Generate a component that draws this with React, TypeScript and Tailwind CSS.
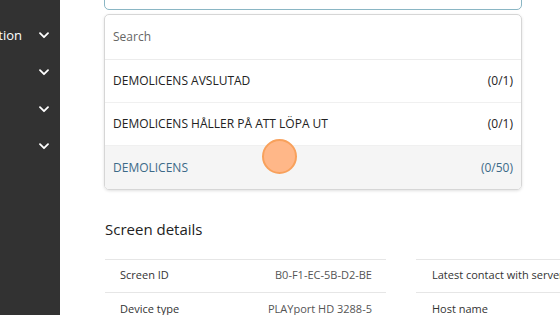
import React from 'react';

const navItems = ['Presentation', '', '', ''];

const licenses = [
  { name: 'DEMOLICENS AVSLUTAD', count: '(0/1)', active: false },
  { name: 'DEMOLICENS HÅLLER PÅ ATT LÖPA UT', count: '(0/1)', active: false },
  { name: 'DEMOLICENS', count: '(0/50)', active: true },
];

const Chevron = () => (
  <svg width="10" height="7" viewBox="0 0 10 7" fill="none" className="shrink-0">
    <path d="M1 1.2L5 5.2L9 1.2" stroke="white" strokeWidth="1.8" strokeLinecap="round" strokeLinejoin="round" />
  </svg>
);

const App: React.FC = () => {
  return (
    <div className="flex w-[560px] h-[315px] overflow-hidden bg-white" style={{ fontFamily: '"Open Sans", "Liberation Sans", sans-serif' }}>
      {/* Sidebar */}
      <div className="w-[60px] shrink-0 bg-[#323232] overflow-hidden pt-[17px]">
        {navItems.map((label, i) => (
          <div key={i} className="flex items-center justify-end h-[37px] pr-[11px] gap-[17px] whitespace-nowrap">
            <span className="text-[13px] text-white">{label}</span>
            <Chevron />
          </div>
        ))}
      </div>

      {/* Main */}
      <div className="flex-1 pl-[44px] relative">
        <div className="w-[416px] h-[8px] -mt-[20px] pt-[20px] box-content rounded-[5px] border border-[#8ab6c4]" />

        <div className="relative mt-[4px] w-[418px] rounded-[5px] border border-[#d6d6d6] shadow-[0_1px_3px_rgba(0,0,0,0.12)] overflow-hidden">
          <div className="h-[45px] flex items-center px-[8px] border-b border-[#ececec] text-[12px] text-[#666]">Search</div>
          {licenses.map((l, i) => (
            <div
              key={l.name}
              className={`h-[43px] flex items-center justify-between px-[8px] text-[12px] ${i < licenses.length - 1 ? 'border-b border-[#f0f0f0]' : ''} ${l.active ? 'bg-[#f5f5f5] text-[#3c6a88]' : 'text-[#222]'}`}
            >
              <span>{l.name}</span>
              <span>{l.count}</span>
            </div>
          ))}
          <div className="absolute left-[157px] top-[124px] w-[35px] h-[35px] rounded-full bg-[#ffb788] border-2 border-[#f8a15c]" />
        </div>

        <h2 className="mt-[28px] ml-[1px] text-[15px] text-[#222]">Screen details</h2>

        <div className="mt-[18px] ml-[1px] flex gap-[30px]">
          <div className="w-[281px] shrink-0 border-t border-[#e6e6e6] text-[11px] text-[#333]">
            <div className="h-[33px] flex items-center justify-between pl-[15px] pr-[14px] border-b border-[#e6e6e6]">
              <span>Screen ID</span>
              <span className="text-[#555]">B0-F1-EC-5B-D2-BE</span>
            </div>
            <div className="h-[33px] flex items-center justify-between pl-[15px] pr-[14px]">
              <span>Device type</span>
              <span className="text-[#555]">PLAYport HD 3288-5</span>
            </div>
          </div>
          <div className="w-[281px] shrink-0 border-t border-[#e6e6e6] text-[11px] text-[#333]">
            <div className="h-[33px] flex items-center pl-[16px] border-b border-[#e6e6e6] whitespace-nowrap">
              <span>Latest contact with server</span>
            </div>
            <div className="h-[33px] flex items-center pl-[16px]">
              <span>Host name</span>
            </div>
          </div>
        </div>
      </div>
    </div>
  );
};

export default App;
